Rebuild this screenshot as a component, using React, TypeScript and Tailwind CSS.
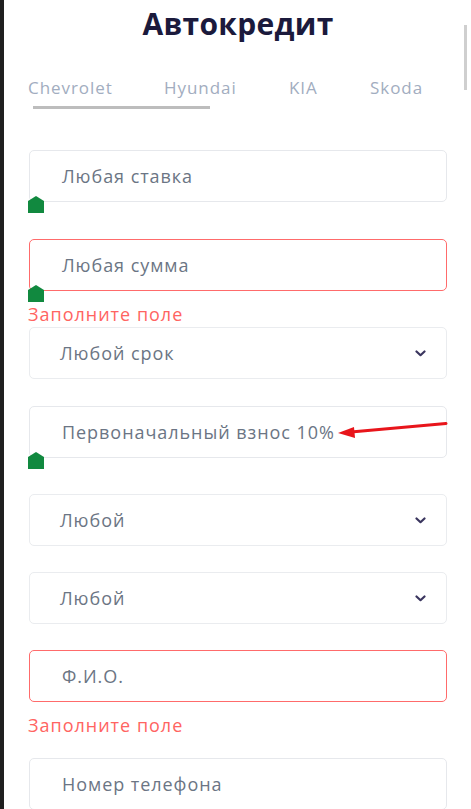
import type { ReactNode } from 'react';

const font = { fontFamily: '"Open Sans", "Noto Sans", sans-serif' };

function RangeThumb() {
  return (
    <svg className="absolute left-[-1px] top-[46px] w-[16px] h-[17px]" viewBox="0 0 16 17">
      <polygon points="0,5 8,0 16,5 16,17 0,17" fill="#11893f" />
    </svg>
  );
}

function Chevron() {
  return (
    <svg className="w-[11px] h-[7px]" viewBox="0 0 11 7" fill="none">
      <path d="M1.5 1.5L5.5 5.2L9.5 1.5" stroke="#3a355e" strokeWidth={2.2} strokeLinecap="round" strokeLinejoin="round" />
    </svg>
  );
}

function Field({ label, error, slider, children }: { label: string; error?: boolean; slider?: boolean; children?: ReactNode }) {
  return (
    <div className="relative">
      <div
        className={`h-[52px] flex items-center pl-[32px] pr-[20px] rounded-[5px] border bg-white text-[18px] text-[#6b7584] tracking-[0.95px] ${
          error ? 'border-[#ff6b6b]' : 'border-[#e6e8ec]'
        }`}
      >
        {label}
      </div>
      {slider && <RangeThumb />}
      {children}
    </div>
  );
}

function Select({ label }: { label: string }) {
  return (
    <div className="h-[52px] flex items-center justify-between pl-[30px] pr-[20px] rounded-[5px] border border-[#eaecef] bg-white text-[18px] text-[#6b7584] tracking-[0.95px]">
      <span>{label}</span>
      <Chevron />
    </div>
  );
}

function ErrorText() {
  return <div className="h-[22px] leading-[22px] text-[18px] text-[#ff6461] tracking-[1px] -ml-[1px]">Заполните поле</div>;
}

export default function App() {
  return (
    <div className="relative flex h-[809px] overflow-hidden bg-white" style={font}>
      <div className="w-[4px] shrink-0 bg-[#1f1f1f]" />

      <div className="flex-1 pl-[25px] pr-[24px] pt-[6px]">
        <h1 className="h-[36px] leading-[36px] text-center text-[30px] font-bold text-[#1b1a3c] tracking-[0.3px]">Автокредит</h1>

        {/* Brand tabs */}
        <div className="mt-[34px] flex h-[24px] items-center text-[17px] text-[#a2adc0] tracking-[0.95px] -ml-[1px]">
          <span className="w-[136px]">Chevrolet</span>
          <span className="w-[125px]">Hyundai</span>
          <span className="w-[81px]">KIA</span>
          <span>Skoda</span>
        </div>
        <div className="mt-[6px] ml-[4px] w-[177px] h-[3px] bg-[#bdbdbd]" />

        <div className="mt-[41px]">
          <Field label="Любая ставка" slider />
        </div>

        <div className="mt-[37px]">
          <Field label="Любая сумма" error slider />
        </div>
        <div className="mt-[12px]">
          <ErrorText />
        </div>

        <div className="mt-[2px]">
          <Select label="Любой срок" />
        </div>

        <div className="mt-[27px]">
          <Field label="Первоначальный взнос 10%" slider>
            <svg className="absolute left-[308px] top-[16px] w-[112px] h-[17px]" viewBox="0 0 112 17" fill="none">
              <line x1="14" y1="10" x2="109" y2="1.5" stroke="#e8151b" strokeWidth={3} strokeLinecap="round" />
              <polygon points="1,11 17,5 18,16" fill="#e8151b" />
            </svg>
          </Field>
        </div>

        <div className="mt-[36px]">
          <Select label="Любой" />
        </div>

        <div className="mt-[26px]">
          <Select label="Любой" />
        </div>

        <div className="mt-[26px]">
          <Field label="Ф.И.О." error />
        </div>
        <div className="mt-[12px]">
          <ErrorText />
        </div>

        <div className="mt-[22px]">
          <Field label="Номер телефона" />
        </div>
      </div>

      {/* scrollbar thumb */}
      <div className="absolute right-[4px] top-[25px] w-[3px] h-[65px] bg-[#cfcfcf]" />
    </div>
  );
}
